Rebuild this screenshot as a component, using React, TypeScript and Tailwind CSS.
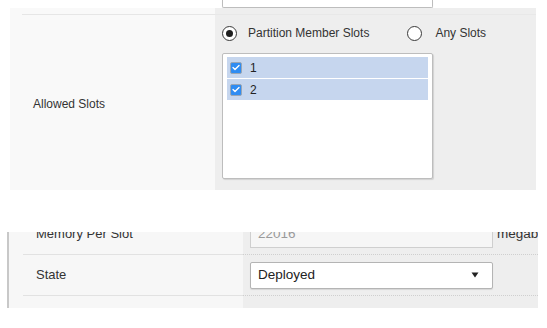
import React from "react";

const FONT = { fontFamily: '"Liberation Sans", Arial, sans-serif' };

function Radio({ checked }: { checked?: boolean }) {
  return (
    <span className="flex h-[15px] w-[15px] items-center justify-center rounded-full border-[1.5px] border-[#3a3a3a] bg-white">
      {checked && <span className="h-[7px] w-[7px] rounded-full bg-[#1f1f1f]" />}
    </span>
  );
}

function Check() {
  return (
    <span className="flex h-[12px] w-[12px] items-center justify-center rounded-[2px] border border-[#9aa6b4] bg-[#2f8cf2]">
      <svg width="8" height="7" viewBox="0 0 8 7" fill="none">
        <path d="M1 3.6 L3 5.4 L7 1.4" stroke="white" strokeWidth="1.4" strokeLinecap="round" strokeLinejoin="round" />
      </svg>
    </span>
  );
}

function SlotItem({ label }: { label: string }) {
  return (
    <div className="flex h-[21px] items-center gap-[8px] bg-[#c6d6ee] pl-[3px]">
      <Check />
      <span className="text-[12px] text-[#222]">{label}</span>
    </div>
  );
}

function FieldRow({ label, children }: { label: string; children: React.ReactNode }) {
  return (
    <div className="flex h-[41px] shrink-0">
      <div className="w-[234px] shrink-0 bg-[#f7f7f7] pl-[14px]">
        <div className="flex h-full items-center border-b border-[#e2e2e2] pl-[13px] text-[13px] text-[#333]">
          {label}
        </div>
      </div>
      <div className="flex min-w-0 flex-1 items-center overflow-hidden border-b border-dotted border-[#cfcfcf] bg-[#eeeeee] pl-[7px]">
        {children}
      </div>
    </div>
  );
}

export default function App() {
  return (
    <div className="h-[328px] w-[547px] overflow-hidden bg-white" style={FONT}>
      {/* tail of the field above */}
      <div className="flex h-[8px]">
        <div className="ml-[222px] h-[8px] w-[211px] rounded-b-[2px] border-x border-b border-[#bdbdbd] bg-white shadow-[0_1px_1px_rgba(0,0,0,0.08)]" />
      </div>

      <div className="ml-[10px] w-[526px]">
        <div className="flex h-[7px]">
          <div className="w-[205px] bg-[#f9f9f9] pl-[12px]">
            <div className="h-full border-b border-[#e6e6e6]" />
          </div>
          <div className="flex-1 border-b border-[#e8e8e8] bg-[#eeeeee]" />
        </div>

        {/* Allowed Slots */}
        <div className="flex h-[175px]">
          <div className="flex w-[205px] items-center bg-[#f9f9f9] pl-[23px] pt-[2px] text-[12px] text-[#333]">
            Allowed Slots
          </div>
          <div className="flex-1 bg-[#eeeeee] pl-[7px] pt-[8px]">
            <div className="flex h-[20px] items-center text-[12px] text-[#333]">
              <Radio checked />
              <span className="ml-[11px]">Partition Member Slots</span>
              <span className="ml-[38px]">
                <Radio />
              </span>
              <span className="ml-[13px]">Any Slots</span>
            </div>
            <div className="mt-[10px] flex h-[126px] w-[211px] flex-col gap-[1px] rounded-[2px] border border-[#bdbdbd] bg-white px-[4px] pt-[3px] shadow-[1px_1px_1px_rgba(0,0,0,0.12)]">
              <SlotItem label="1" />
              <SlotItem label="2" />
            </div>
          </div>
        </div>
      </div>

      {/* lower form */}
      <div className="ml-[7px] mt-[42px] flex h-[76px] w-[531px] flex-col overflow-hidden border-l-[2px] border-[#c8c8c8]">
        <div className="-mt-[18px]">
          <FieldRow label="Memory Per Slot">
            <div className="flex h-[27px] w-[243px] shrink-0 items-center border border-[#cfcfcf] bg-[#f6f6f6] pl-[7px] text-[13.5px] text-[#9a9a9a]">
              22016
            </div>
            <span className="ml-[4px] whitespace-nowrap text-[13.5px] text-[#333]">megabytes</span>
          </FieldRow>
        </div>
        <FieldRow label="State">
          <div className="flex h-[27px] w-[243px] shrink-0 items-center justify-between rounded-[2px] border border-[#b4b4b4] bg-white pl-[7px] pr-[13px] text-[13.5px] text-[#222] shadow-[0_1px_1px_rgba(0,0,0,0.1)]">
            <span>Deployed</span>
            <svg width="8" height="6" viewBox="0 0 8 6">
              <path d="M0.5 0.5 H7.5 L4 5.5 Z" fill="#222" />
            </svg>
          </div>
        </FieldRow>
        <div className="flex flex-1">
          <div className="w-[234px] bg-[#f7f7f7]" />
          <div className="flex-1 bg-[#eeeeee]" />
        </div>
      </div>
    </div>
  );
}
